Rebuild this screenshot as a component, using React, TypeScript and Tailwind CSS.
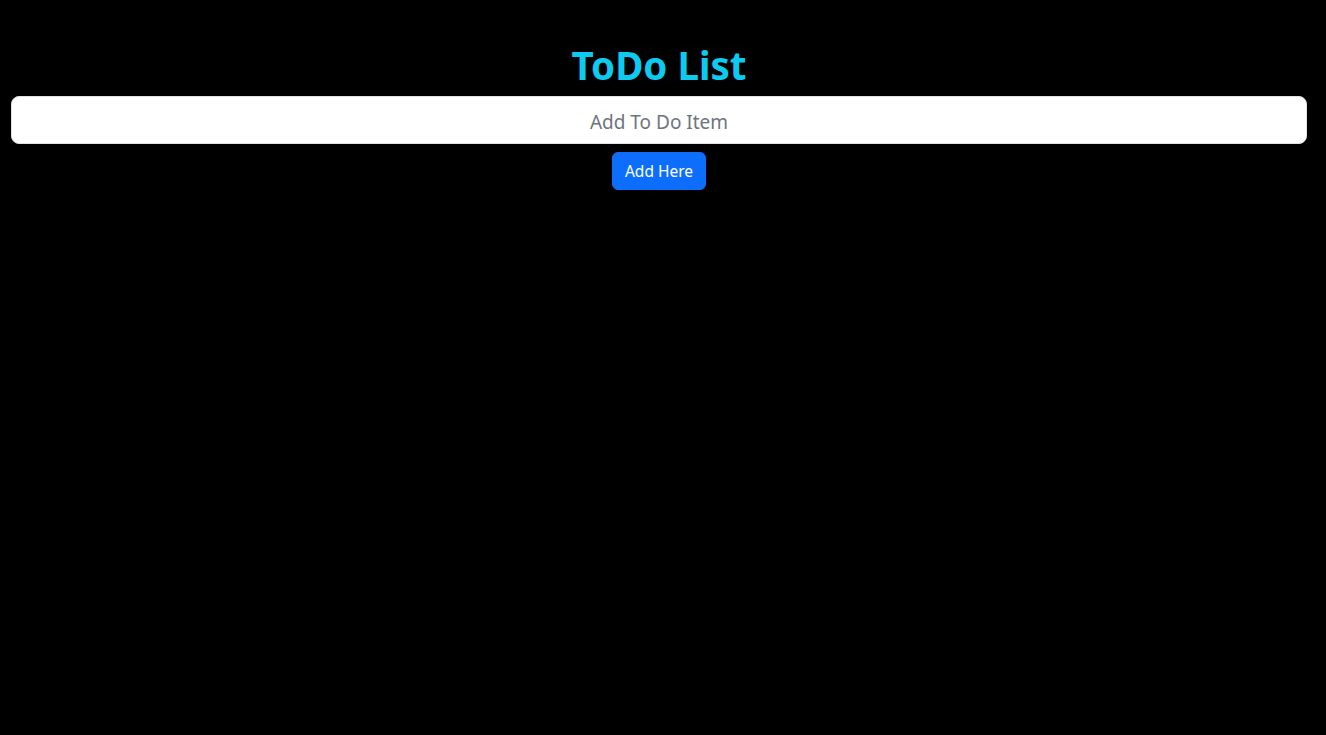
export default function App() {
    return (
        <div className="min-h-[735px] w-full bg-black pt-[41px] font-['Segoe_UI','Noto_Sans',sans-serif]">
            <div className="ml-[11px] flex w-[1296px] flex-col items-center">
                <h1 className="mb-[7px] text-[38.5px] font-bold leading-[48px] text-[#0dcaf0]">ToDo List</h1>
                <input
                    type="text"
                    placeholder="Add To Do Item"
                    className="h-[48px] w-full rounded-lg border border-[#dee2e6] bg-white px-4 pt-[3px] text-center text-[19px] text-[#212529] outline-none placeholder:text-[#6c757d]"
                />
                <button className="mt-2 h-[38px] w-[94px] rounded-md border border-[#0d6efd] bg-[#0d6efd] text-[15.5px] leading-6 text-white">
                    Add Here
                </button>
            </div>
        </div>
    )
}
